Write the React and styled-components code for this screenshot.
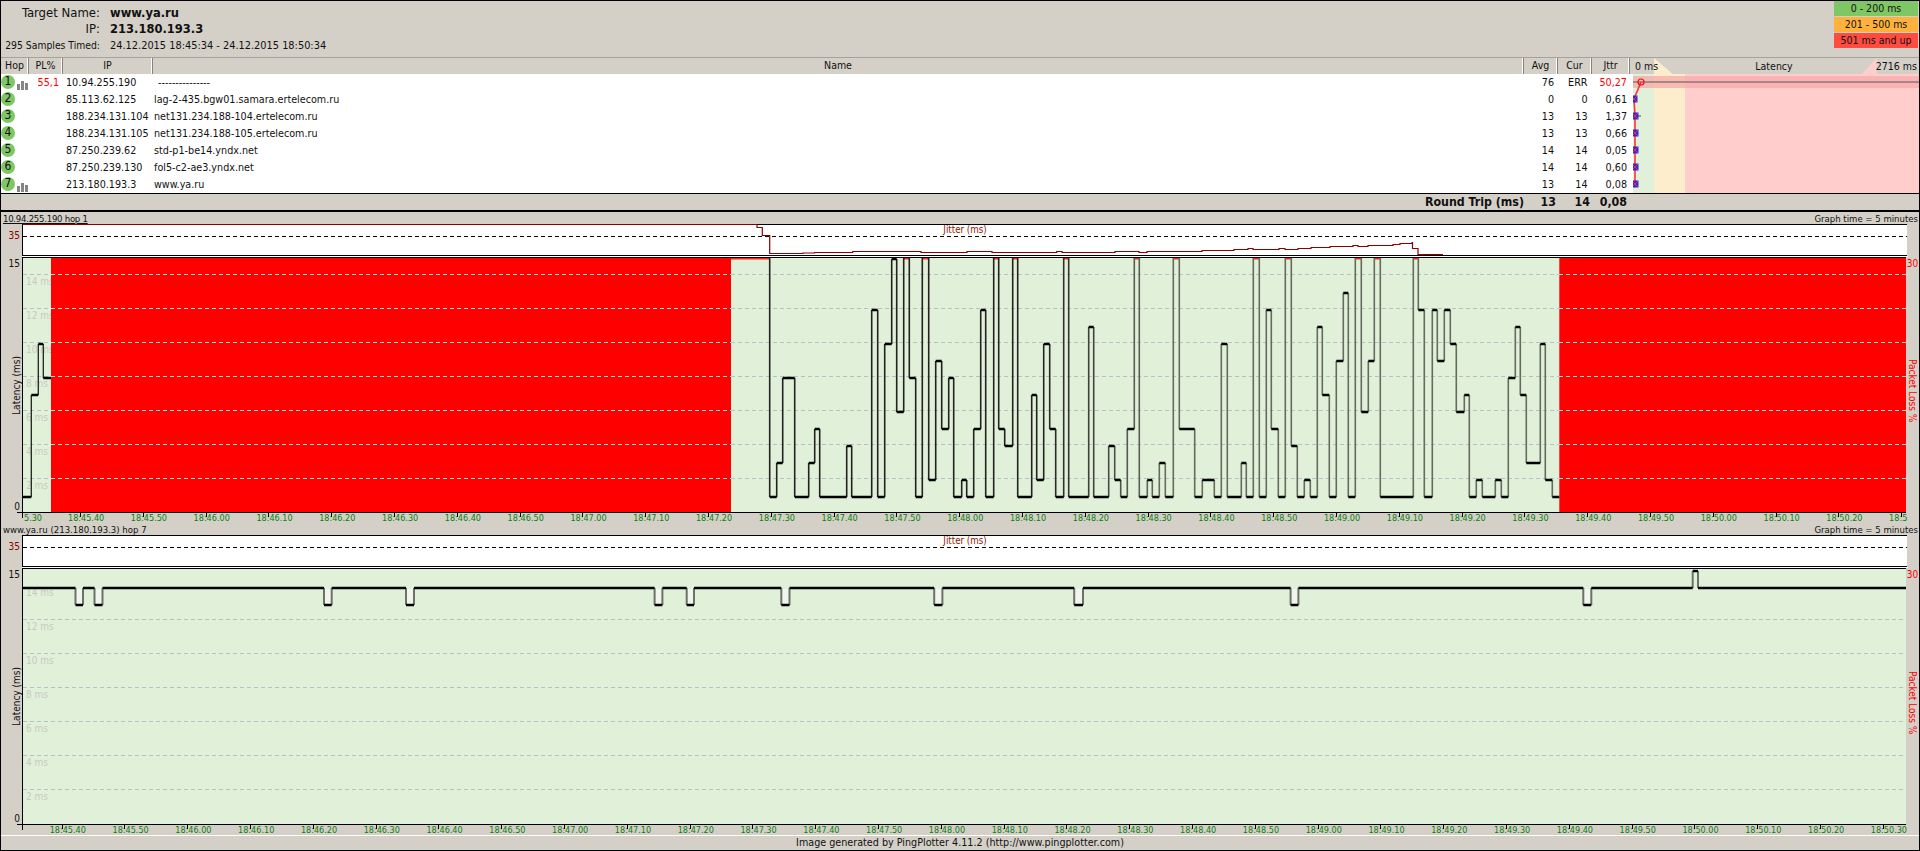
import styled, { createGlobalStyle } from "styled-components"

const FONT = `"DejaVu Sans Condensed", "DejaVu Sans", sans-serif`
const TOP = 16

const hops = [
    { hop: 1, bars: true, pl: "55,1", ip: "10.94.255.190", name: "---------------", nameGap: 4, avg: "76", cur: "ERR", jttr: "50,27", hot: true },
    { hop: 2, ip: "85.113.62.125", name: "lag-2-435.bgw01.samara.ertelecom.ru", avg: "0", cur: "0", jttr: "0,61" },
    { hop: 3, ip: "188.234.131.104", name: "net131.234.188-104.ertelecom.ru", avg: "13", cur: "13", jttr: "1,37" },
    { hop: 4, ip: "188.234.131.105", name: "net131.234.188-105.ertelecom.ru", avg: "13", cur: "13", jttr: "0,66" },
    { hop: 5, ip: "87.250.239.62", name: "std-p1-be14.yndx.net", avg: "14", cur: "14", jttr: "0,05" },
    { hop: 6, ip: "87.250.239.130", name: "fol5-c2-ae3.yndx.net", avg: "14", cur: "14", jttr: "0,60" },
    { hop: 7, bars: true, ip: "213.180.193.3", name: "www.ya.ru", avg: "13", cur: "14", jttr: "0,08" },
]

// [x on the page, latency in ms], TOP means the sample went over the scale
const hop1Start = [[23, 1], [31.3, 7], [38.3, 10], [43.3, 8]]
const hop1Samples = [
    [731, TOP], [769.7, 1], [776.7, 3], [782.7, 8], [794.7, 1], [808.7, 3], [814.7, 5], [819.7, 1], [846.7, 4], [851.7, 1],
    [871.7, 12], [877.7, 1], [884.7, 10], [891.7, 15], [896.7, 6], [903.7, TOP], [909.3, 8], [915.7, 1], [922.3, TOP], [928.7, 2],
    [935.7, 9], [941.7, 5], [948.7, 8], [953.7, 1], [961.7, 2], [966.7, 1], [973.7, 5], [980.7, 12], [985.7, 1], [993.7, TOP],
    [998.7, 5], [1004.7, 4], [1012.7, TOP], [1017.7, 1], [1031.7, 7], [1036.7, 2], [1043.7, 10], [1049.7, 5], [1055.7, 1], [1063.7, TOP],
    [1068.7, 1], [1088.7, 11], [1093.7, 1], [1108.7, 4], [1114.7, 2], [1120.7, 1], [1127.3, 5], [1134.3, TOP], [1139.3, 1], [1147.3, 2],
    [1152.3, 1], [1159.3, 3], [1165.3, 1], [1173.3, TOP], [1179.3, 5], [1194.7, 1], [1202.3, 2], [1214.3, 1], [1221.3, 10], [1227.3, 1],
    [1241.3, 3], [1246.3, 1], [1253.3, TOP], [1259.3, 1], [1266.3, 12], [1271.3, 5], [1278.3, 1], [1285.3, TOP], [1291.3, 4], [1297.3, 1],
    [1304.3, 2], [1310.3, 1], [1317.3, 11], [1322.3, 7], [1329.3, 1], [1336.3, 9], [1343.3, 13], [1348.3, 1], [1355.3, TOP], [1361.3, 6],
    [1368.3, 9], [1374.3, TOP], [1380.3, 1], [1413.3, TOP], [1418.3, 12], [1424.3, 1], [1432.3, 12], [1437.3, 9], [1444.3, 12], [1450.3, 10],
    [1456.3, 6], [1464.3, 7], [1469.3, 1], [1476.3, 2], [1482.3, 1], [1495.3, 2], [1501.3, 1], [1508.3, 8], [1515.3, 11], [1520.3, 7],
    [1526.3, 3], [1540.3, 10], [1545.3, 2], [1552.3, 1],
]
const hop7Samples = [
    [23, 14], [75.5, 13], [83, 14], [94.5, 13], [102.5, 14], [324, 13], [331.7, 14], [406, 13], [414, 14], [654.6, 13], [662.4, 14],
    [686.7, 13], [694, 14], [781.3, 13], [789.5, 14], [934.2, 13], [942.4, 14], [1074.2, 13], [1083, 14], [1290.6, 13], [1298.4, 14],
    [1583.3, 13], [1591.3, 14], [1692.7, 15], [1698, 14],
]
const hop1Jitter = "M757 224.5V227.5H762.3V235.5H769.7V253.5H803V253H814.7V252.5H852.7V251.5H921V252.5H967V251.5H992V252.5H1056.7V251.5H1062V252.5H1115V251.5H1139V252.5H1147V251.5H1202V250.5H1234V249.5H1248V248.5H1253V249.5H1279V248.5H1285V249.5H1298V248.5H1311V247.5H1330V246.5H1353V245.5H1358V246.5H1368V245.5H1393V244.5H1400V243.5H1412V242.5H1412.5V248.5H1418V254.5H1443"

const stepPaths = (samples, yOf, end) => {
    let flat = ""
    let rise = ""
    let over = ""
    samples.forEach(([x, v], i) => {
        const next = samples[i + 1]
        const nextX = next ? next[0] : end
        if (v === TOP) over += `M${x} 258.8H${nextX}`
        else flat += `M${x} ${yOf(v)}H${nextX}`
        if (next) rise += `M${nextX} ${yOf(v)}V${yOf(next[1])}`
    })
    return { flat, rise, over }
}

const gridLines = (ys, from, to) => ys.map((y) => `M${from} ${y}H${to}`).join("")

const timeLabels = (firstSecond, count) => {
    const out = []
    for (let i = 0; i < count; i++) {
        const total = firstSecond + i * 10
        const min = Math.floor(total / 60)
        const sec = String(total % 60).padStart(2, "0")
        out.push(`18:${min}.${sec}`)
    }
    return out
}

const TimeAxis = ({ labels, lead, offset, height }) => (
    <AxisRow $height={height}>
        <AxisSpacer />
        <AxisTrack $offset={offset}>
            {lead && <AxisLead>{lead}</AxisLead>}
            {labels.map((label) => (
                <AxisCell key={label}>
                    <AxisTick />
                    {label}
                </AxisCell>
            ))}
        </AxisTrack>
    </AxisRow>
)

const Graph = ({ title, active, top, plotHeight, jitterTop, jitterPath, overTo, children, axis, axisHeight, titleHeight }) => {
    const viewY = top + 1
    const ys = [14, 12, 10, 8, 6, 4, 2].map((ms) => Math.floor(top + 255.3 - ms * 17) + 0.5)
    return (
        <section>
            <GraphTitle $height={titleHeight}>
                <TitleText $active={active}>{title}</TitleText>
                <span>Graph time = 5 minutes</span>
            </GraphTitle>
            <JitterRow>
                <LeftScale><JitterMax>35</JitterMax></LeftScale>
                <JitterBox>
                    <JitterLabel>Jitter (ms)</JitterLabel>
                    <JitterSvg width="1884" height="31" viewBox={`23 ${jitterTop} 1884 31`}>
                        <path d={`M23 ${jitterTop + 0.5}H1907`} stroke="#000" fill="none" />
                        {overTo && <path d={`M23 ${jitterTop + 0.5}H${overTo}`} stroke="#8b0000" fill="none" />}
                        <path d={`M23 ${jitterTop + 12.5}H1907`} stroke="#000" strokeDasharray="4 3" fill="none" />
                        {jitterPath && <path d={jitterPath} stroke="#8b0000" strokeWidth="1.2" fill="none" />}
                    </JitterSvg>
                </JitterBox>
            </JitterRow>
            <Gap />
            <PlotRow>
                <LeftScale $spread>
                    <span>15</span>
                    <AxisName>Latency (ms)</AxisName>
                    <span>0</span>
                </LeftScale>
                <Plot $height={plotHeight}>
                    <GridLabels>
                        {[14, 12, 10, 8, 6, 4, 2].map((ms) => <GridLabel key={ms}>{ms} ms</GridLabel>)}
                    </GridLabels>
                    <PlotSvg width="1883" height={plotHeight - 2} viewBox={`23 ${viewY} 1883 ${plotHeight - 2}`}>
                        {children(ys)}
                    </PlotSvg>
                </Plot>
                <RightScale>
                    <span>30</span>
                    <LossName>Packet Loss %</LossName>
                </RightScale>
            </PlotRow>
            <TimeAxis labels={axis.labels} lead={axis.lead} offset={axis.offset} height={axisHeight} />
        </section>
    )
}

const App = () => {
    const startLine = stepPaths(hop1Start, (v) => 514 - 17 * v, 51)
    const hop1Line = stepPaths(hop1Samples, (v) => 514 - 17 * v, 1559.3)
    const hop7Line = stepPaths(hop7Samples, (v) => 826 - 17 * v, 1906)

    return (
        <>
            <GlobalStyle />
            <Window>
                <Summary>
                    <SummaryGrid>
                        <SummaryLabel>Target Name:</SummaryLabel>
                        <SummaryValue>www.ya.ru</SummaryValue>
                        <SummaryLabel>IP:</SummaryLabel>
                        <SummaryValue>213.180.193.3</SummaryValue>
                        <SamplesLabel>295 Samples Timed:</SamplesLabel>
                        <SamplesValue>24.12.2015 18:45:34 - 24.12.2015 18:50:34</SamplesValue>
                    </SummaryGrid>
                    <Legend>
                        <LegendItem $bg="#7fc764">0 - 200 ms</LegendItem>
                        <LegendItem $bg="#ffb13d">201 - 500 ms</LegendItem>
                        <LegendItem $bg="#ff4b40">501 ms and up</LegendItem>
                    </Legend>
                </Summary>

                <TableHead>
                    <HeadCell $w={28}>Hop</HeadCell>
                    <HeadCell $w={34}>PL%</HeadCell>
                    <HeadCell $w={90}>IP</HeadCell>
                    <HeadCell $w={1371}>Name</HeadCell>
                    <HeadCell $w={34}>Avg</HeadCell>
                    <HeadCell $w={34}>Cur</HeadCell>
                    <HeadCell $w={38}>Jttr</HeadCell>
                    <LatencyHead>
                        <LatencyCorners width="289" height="16" viewBox="1630 58 289 16">
                            <polygon points="1654,58 1672.7,74 1654,74" fill="#fdedcc" />
                            <polygon points="1876.7,58 1861.7,74 1876.7,74" fill="#ffcdcb" />
                        </LatencyCorners>
                        <LatencyText>0 ms</LatencyText>
                        <LatencyText $center>Latency</LatencyText>
                        <LatencyText>2716 ms</LatencyText>
                    </LatencyHead>
                </TableHead>

                <TableBody>
                    <Rows>
                        {hops.map((row) => (
                            <Row key={row.hop}>
                                <HopCell>
                                    <HopBadge>{row.hop}</HopBadge>
                                    {row.bars && (
                                        <svg width="12" height="10" viewBox="0 0 12 10">
                                            <rect x="0" y="4" width="3" height="6" fill="#858585" />
                                            <rect x="4" y="1" width="3" height="9" fill="#858585" />
                                            <rect x="8" y="3" width="3" height="7" fill="#858585" />
                                        </svg>
                                    )}
                                </HopCell>
                                <LossCell>{row.pl}</LossCell>
                                <IpCell>{row.ip}</IpCell>
                                <NameCell $gap={row.nameGap}>{row.name}</NameCell>
                                <NumCell $pad={4}>{row.avg}</NumCell>
                                <NumCell $pad={4.5}>{row.cur}</NumCell>
                                <NumCell $pad={6} $hot={row.hot}>{row.jttr}</NumCell>
                            </Row>
                        ))}
                    </Rows>
                    <LatencyGraph width="286" height="119" viewBox="1633 74 286 119">
                        <rect x="1633" y="74" width="21" height="119" fill="#e1f0d8" />
                        <rect x="1654" y="74" width="31" height="119" fill="#fdedcc" />
                        <rect x="1685" y="74" width="234" height="119" fill="#ffcdcb" />
                        <rect x="1633" y="76" width="286" height="12" fill="#f5aaaa" opacity="0.75" />
                        <rect x="1633" y="81" width="286" height="2" fill="#a98585" />
                        <path d="M1637 116h4" stroke="#999" strokeWidth="2" />
                        <polyline points="1641,82 1634,99 1635,116 1635,133 1635,150 1635,167 1635,184" fill="none" stroke="#ff3333" strokeWidth="1.6" />
                        <circle cx="1641" cy="82" r="3" fill="none" stroke="#ee1111" strokeWidth="1.2" />
                        {[[1634, 99], [1635, 116], [1635, 133], [1635, 150], [1635, 167], [1635, 184]].map(([x, y]) => (
                            <g key={y}>
                                <rect x={x - 3.5} y={y - 3.5} width="7" height="7" fill="#2a2ae6" />
                                <path d={`M${x - 3} ${y - 3}l6 6m0 -6l-6 6`} stroke="#ff2a2a" strokeWidth="1" />
                            </g>
                        ))}
                    </LatencyGraph>
                </TableBody>

                <RoundTrip>
                    <RoundLabel>Round Trip (ms)</RoundLabel>
                    <RoundNum $pad={2}>13</RoundNum>
                    <RoundNum $pad={2}>14</RoundNum>
                    <RoundNum $pad={6}>0,08</RoundNum>
                </RoundTrip>

                <Graph
                    title="10.94.255.190 hop 1"
                    active
                    top={257}
                    plotHeight={256}
                    titleHeight={12}
                    jitterTop={224}
                    jitterPath={hop1Jitter}
                    overTo={757}
                    axis={{ lead: "5.30", labels: [...timeLabels(45 * 60 + 40, 29), "18:5"], offset: 0 }}
                    axisHeight={11}
                >
                    {(ys) => (
                        <>
                            <defs>
                                <linearGradient id="hop1Rise" gradientUnits="userSpaceOnUse" x1="1040" x2="1160" y1="0" y2="0">
                                    <stop offset="0" stopColor="#222" />
                                    <stop offset="1" stopColor="#666b60" />
                                </linearGradient>
                            </defs>
                            <rect x="51" y="258" width="680" height="254" fill="#ff0000" />
                            <rect x="1559.3" y="258" width="347" height="254" fill="#ff0000" />
                            <path d={gridLines(ys, 731, 1559)} stroke="#bdbdc6" strokeDasharray="4 3" fill="none" />
                            <path d={gridLines(ys, 23, 51)} stroke="#bdbdc6" strokeDasharray="4 3" fill="none" />
                            <path d={gridLines(ys, 51, 731)} stroke="#ffd0d0" strokeDasharray="4 3" fill="none" />
                            <path d={gridLines(ys, 1559, 1906)} stroke="#ffd0d0" strokeDasharray="4 3" fill="none" />
                            <path d={hop1Line.over} stroke="#ff2020" strokeWidth="1.5" fill="none" />
                            <path d={startLine.rise} stroke="#222" strokeWidth="1.3" fill="none" />
                            <path d={hop1Line.rise} stroke="url(#hop1Rise)" strokeWidth="1.6" fill="none" />
                            <path d={startLine.flat} stroke="#000" strokeWidth="2.4" fill="none" />
                            <path d={hop1Line.flat} stroke="#000" strokeWidth="2.4" fill="none" />
                        </>
                    )}
                </Graph>

                <Graph
                    title="www.ya.ru (213.180.193.3) hop 7"
                    top={568}
                    plotHeight={257}
                    titleHeight={11}
                    jitterTop={535}
                    axis={{ labels: timeLabels(45 * 60 + 40, 30), offset: 27.7 }}
                    axisHeight={10}
                >
                    {(ys) => (
                        <>
                            <path d={gridLines(ys.slice(1), 23, 1906)} stroke="#bdbdc6" strokeDasharray="4 3" fill="none" />
                            {hop7Samples.map(([x, v], i) => (v === 13 ? (
                                <rect key={x} x={x} y="589" width={hop7Samples[i + 1][0] - x} height="15" fill="#f1f5ee" />
                            ) : null))}
                            <path d={hop7Line.rise} stroke="#6d7168" strokeWidth="2" fill="none" />
                            <path d={hop7Line.flat} stroke="#000" strokeWidth="2.4" fill="none" />
                        </>
                    )}
                </Graph>

                <Footer>Image generated by PingPlotter 4.11.2 (http://www.pingplotter.com)</Footer>
            </Window>
        </>
    )
}

const GlobalStyle = createGlobalStyle`
html, body {
    margin: 0;
    padding: 0;
    background: #d4d0c8;
}
section {
    display: block;
}
`

const Window = styled.div`
width: 1920px;
height: 851px;
box-sizing: border-box;
border: 1px solid #000;
background: #d4d0c8;
overflow: hidden;
font-family: ${FONT};
font-size: 10px;
color: #111;
`

const Summary = styled.div`
height: 56px;
display: flex;
justify-content: space-between;
padding-right: 1px;
box-sizing: border-box;
`

const SummaryGrid = styled.div`
display: grid;
grid-template-columns: 99px auto;
column-gap: 10px;
grid-auto-rows: 16.5px;
align-items: center;
padding-top: 3px;
height: 50px;
`

const SummaryLabel = styled.div`
text-align: right;
font-size: 13px;
white-space: nowrap;
`

const SummaryValue = styled.div`
font-size: 12.8px;
font-weight: 700;
white-space: nowrap;
`

const SamplesLabel = styled.div`
font-size: 10.3px;
text-align: right;
white-space: nowrap;
`

const SamplesValue = styled.div`
font-size: 10.9px;
white-space: nowrap;
`

const Legend = styled.div`
width: 84px;
display: flex;
flex-direction: column;
gap: 1px;
`

const LegendItem = styled.div`
height: 15px;
line-height: 15px;
text-align: center;
background: ${(p) => p.$bg};
font-size: 10.5px;
`

const TableHead = styled.div`
display: flex;
height: 17px;
box-sizing: border-box;
border-top: 1px solid #a6a39c;
`

const HeadCell = styled.div`
flex: 0 0 ${(p) => p.$w}px;
box-sizing: border-box;
text-align: center;
line-height: 15px;
font-size: 10.5px;
border-right: 1px solid #85827c;
box-shadow: inset -1px 0 0 #fff;
`

const LatencyHead = styled.div`
position: relative;
flex: 1;
display: flex;
justify-content: space-between;
padding: 0 2px 0 5px;
line-height: 16px;
font-size: 10.5px;
`

const LatencyCorners = styled.svg`
position: absolute;
left: 0;
top: 0;
`

const LatencyText = styled.span`
position: relative;
left: ${(p) => (p.$center ? "7px" : "0")};
`

const TableBody = styled.div`
display: flex;
height: 119px;
border-bottom: 1px solid #000;
`

const Rows = styled.div`
flex: 0 0 1632px;
background: #fff;
`

const LatencyGraph = styled.svg`
display: block;
`

const Row = styled.div`
display: grid;
grid-template-columns: 28px 34px 90px 1371px 34px 34px 41px;
height: 17px;
line-height: 17px;
font-size: 10.7px;
`

const HopCell = styled.div`
display: flex;
align-items: flex-end;
gap: 2px;
padding-bottom: 1px;
box-sizing: border-box;
`

const HopBadge = styled.div`
flex: none;
width: 14px;
height: 14px;
margin-bottom: 1.5px;
border-radius: 50%;
background: #7fc764;
text-align: center;
line-height: 13px;
font-size: 12px;
`

const LossCell = styled.div`
color: #f00;
text-align: right;
padding-right: 4px;
`

const IpCell = styled.div`
padding-left: 3px;
white-space: nowrap;
`

const NameCell = styled.div`
padding-left: ${(p) => 1 + (p.$gap || 0)}px;
white-space: nowrap;
`

const NumCell = styled.div`
text-align: right;
padding-right: ${(p) => p.$pad}px;
color: ${(p) => (p.$hot ? "#f00" : "inherit")};
`

const RoundTrip = styled.div`
display: grid;
grid-template-columns: 1523px 34px 34px 41px;
height: 16px;
line-height: 16px;
font-size: 12.3px;
font-weight: 700;
border-bottom: 2px solid #000;
`

const RoundLabel = styled.div`
text-align: right;
`

const RoundNum = styled.div`
text-align: right;
padding-right: ${(p) => p.$pad}px;
`

const GraphTitle = styled.div`
height: ${(p) => p.$height}px;
display: flex;
justify-content: space-between;
align-items: center;
padding: 0 1px 0 2px;
font-size: 9.5px;
line-height: 11px;
`

const TitleText = styled.span`
text-decoration: ${(p) => (p.$active ? "underline" : "none")};
letter-spacing: ${(p) => (p.$active ? "-0.25px" : "0")};
`

const JitterRow = styled.div`
display: flex;
height: 32px;
`

const LeftScale = styled.div`
flex: 0 0 21px;
min-width: 0;
box-sizing: border-box;
padding-right: 2px;
display: flex;
flex-direction: column;
align-items: flex-end;
justify-content: ${(p) => (p.$spread ? "space-between" : "flex-start")};
font-size: 10px;
padding-top: ${(p) => (p.$spread ? "1px" : "0")};
padding-bottom: ${(p) => (p.$spread ? "1px" : "0")};
`

const JitterMax = styled.span`
color: #8b0000;
margin-top: 6px;
`

const JitterBox = styled.div`
position: relative;
width: 1885px;
box-sizing: border-box;
background: #fff;
border-left: 1px solid #000;
border-bottom: 1px solid #000;
`

const JitterSvg = styled.svg`
display: block;
`

const JitterLabel = styled.span`
position: absolute;
top: 0;
left: 0;
right: 0;
line-height: 12px;
text-align: center;
font-size: 9.7px;
color: #8b2000;
`

const Gap = styled.div`
height: 1px;
margin-left: 21px;
width: 1886px;
background: #fff;
`

const PlotRow = styled.div`
display: flex;
`

const Plot = styled.div`
position: relative;
flex: 0 0 1884px;
height: ${(p) => p.$height}px;
box-sizing: border-box;
background: #e1f0d8;
border: 1px solid #000;
border-right: none;
&::after {
    content: "";
    position: absolute;
    left: -6px;
    bottom: -1px;
    width: 5px;
    height: 1px;
    background: #000;
}
`

const PlotSvg = styled.svg`
position: relative;
z-index: 1;
display: block;
`

const GridLabels = styled.div`
position: absolute;
top: 7px;
left: 3px;
display: flex;
flex-direction: column;
`

const GridLabel = styled.div`
height: 34px;
line-height: 34px;
font-size: 10px;
color: #c9c9c4;
`

const AxisName = styled.span`
writing-mode: vertical-rl;
transform: translateX(5.5px) rotate(180deg);
align-self: center;
font-size: 10px;
`

const RightScale = styled.div`
flex: 1;
display: flex;
flex-direction: column;
align-items: center;
color: #f00;
font-size: 10px;
padding-top: 1px;
`

const LossName = styled.span`
writing-mode: vertical-rl;
margin: auto 0;
font-size: 10px;
`

const AxisRow = styled.div`
display: flex;
height: ${(p) => p.$height}px;
`

const AxisSpacer = styled.div`
flex: 0 0 21px;
`

const AxisTrack = styled.div`
position: relative;
flex: 0 0 1885px;
display: flex;
padding-left: ${(p) => p.$offset}px;
box-sizing: border-box;
&::before {
    content: "";
    position: absolute;
    left: 0;
    top: 0;
    width: 1px;
    height: 5px;
    background: #000;
}
`

const AxisCell = styled.div`
position: relative;
flex: 0 0 62.8px;
white-space: nowrap;
font-size: 9px;
line-height: 11px;
color: #0a7d0a;
`

const AxisLead = styled(AxisCell)`
flex-basis: 46px;
padding-left: 2px;
box-sizing: border-box;
`

const AxisTick = styled.i`
position: absolute;
left: 12px;
top: 0;
width: 1px;
height: 4px;
background: #000;
`

const Footer = styled.div`
height: 15px;
line-height: 14px;
box-sizing: border-box;
border-top: 1px solid #fff;
text-align: center;
font-size: 10.7px;
`

export default App
